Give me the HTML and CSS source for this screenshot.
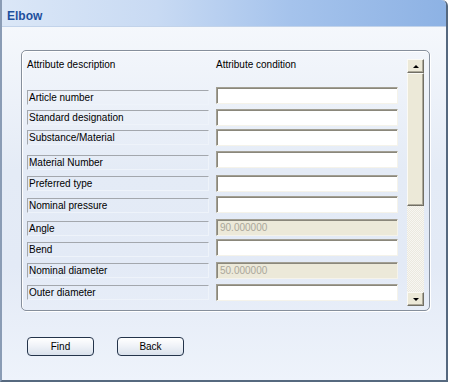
FILE: index.html
```html
<!DOCTYPE html>
<html lang="en">
<head>
  <meta charset="UTF-8">
  <title>Elbow</title>
  <link rel="stylesheet" href="styles.css">
</head>
<body>
  <div class="window">
    <div class="titlebar">Elbow</div>
    <div class="client">
      <div class="panel">
        <div class="table">
          <div class="cols">
            <div class="head">
              <div>Attribute description</div>
              <div>Attribute condition</div>
            </div>
            <div class="grid">
              <div class="label o3">Article number</div><div class="field"></div>
              <div class="label o1">Standard designation</div><div class="field"></div>
              <div class="label o1">Substance/Material</div><div class="field"></div>
              <div class="label o4">Material Number</div><div class="field"></div>
              <div class="label o1">Preferred type</div><div class="field"></div>
              <div class="label o2">Nominal pressure</div><div class="field"></div>
              <div class="label o2">Angle</div><div class="field disabled">90.000000</div>
              <div class="label o3">Bend</div><div class="field"></div>
              <div class="label o1">Nominal diameter</div><div class="field disabled">50.000000</div>
              <div class="label o1">Outer diameter</div><div class="field"></div>
            </div>
          </div>
          <div class="scrollbar">
            <div class="sb-btn"><span class="arrow up"></span></div>
            <div class="sb-thumb"></div>
            <div class="sb-track"></div>
            <div class="sb-btn"><span class="arrow down"></span></div>
          </div>
        </div>
      </div>
      <div class="actions">
        <button class="btn">Find</button>
        <button class="btn">Back</button>
      </div>
    </div>
  </div>
</body>
</html>
```

FILE: styles.css
```css
html, body { margin: 0; padding: 0; background: #fff; font-family: "Liberation Sans", Arial, sans-serif; font-size: 10px; color: #000; }
.window { width: 448px; height: 382px; box-sizing: border-box; border-left: 2px solid #8a9cb5; border-right: 2px solid #55687f; border-bottom: 2px solid #56697f; border-top-right-radius: 6px; display: flex; flex-direction: column; background: linear-gradient(#f8fafd, #e4ebf6 45%, #e3eaf6 70%, #eef3fb); }
.titlebar { height: 27px; box-sizing: border-box; padding: 5px 0 0 5px; line-height: 22px; font-size: 12px; font-weight: bold; color: #1d4f9d; background: linear-gradient(to right, #dbe7f7, #c8daf3 35%, #a5c3ec 65%, #8db2e4); border-bottom: 1px solid #c2d3ea; border-top-right-radius: 5px; }
.client { flex: 1; padding: 23px 0 0 19px; }
.panel { width: 409px; height: 261px; box-sizing: border-box; border: 1px solid #868f9c; border-radius: 5px; box-shadow: 1px 1px 0 #fff, inset 1px 1px 0 #fff; padding: 8px 5px 0 5px; }
.table { display: flex; gap: 9px; }
.cols { width: 371px; }
.head { display: grid; grid-template-columns: 182px 182px; column-gap: 7px; line-height: 12px; margin-bottom: 16px; }
.grid { display: grid; grid-template-columns: 182px 182px; column-gap: 7px; grid-template-rows: 22px 20px 22px 24px 21px 23px 20px 23px 22px 17px; align-items: start; }
.label { height: 15px; box-sizing: border-box; line-height: 13px; padding-left: 1px; border: 1px solid; border-color: #a3a7ad #eef3fa #eef3fa #a3a7ad; white-space: nowrap; }
.o1 { margin-top: 1px; }
.o2 { margin-top: 2px; }
.o3 { margin-top: 3px; }
.o4 { margin-top: 4px; }
.field { height: 17px; box-sizing: border-box; background: #fff; border: 1px solid; border-color: #a29f93 #f5f3ea #f5f3ea #a29f93; box-shadow: inset 1px 1px 0 #8a877b; line-height: 15px; padding-left: 3px; }
.field.disabled { background: #ece9d9; color: #aaa799; }
.scrollbar { width: 17px; height: 247px; display: flex; flex-direction: column; }
.sb-btn { height: 14px; box-sizing: border-box; background: #ece9d8; border: 1px solid; border-color: #fbfaf5 #716f64 #716f64 #fbfaf5; box-shadow: inset -1px -1px 0 #aca899; display: flex; align-items: center; justify-content: center; }
.arrow { width: 0; height: 0; border-left: 3px solid transparent; border-right: 3px solid transparent; }
.arrow.up { border-bottom: 3px solid #000; }
.arrow.down { border-top: 3px solid #000; }
.sb-thumb { height: 133px; box-sizing: border-box; background: #ece9d8; border: 1px solid; border-color: #fbfaf5 #716f64 #716f64 #fbfaf5; box-shadow: inset -1px -1px 0 #aca899; }
.sb-track { flex: 1; background: repeating-conic-gradient(#f7f6f2 0 25%, #ebe9df 0 50%) 0 0 / 2px 2px; }
.actions { display: flex; gap: 23px; padding-left: 6px; margin-top: 26px; }
.btn { width: 67px; height: 19px; padding: 0; font-family: "Liberation Sans", Arial, sans-serif; font-size: 10px; color: #000; border: 1px solid #24344b; border-radius: 4px; background: linear-gradient(#ffffff, #f0f3f8 45%, #d9e1ec); }
```
